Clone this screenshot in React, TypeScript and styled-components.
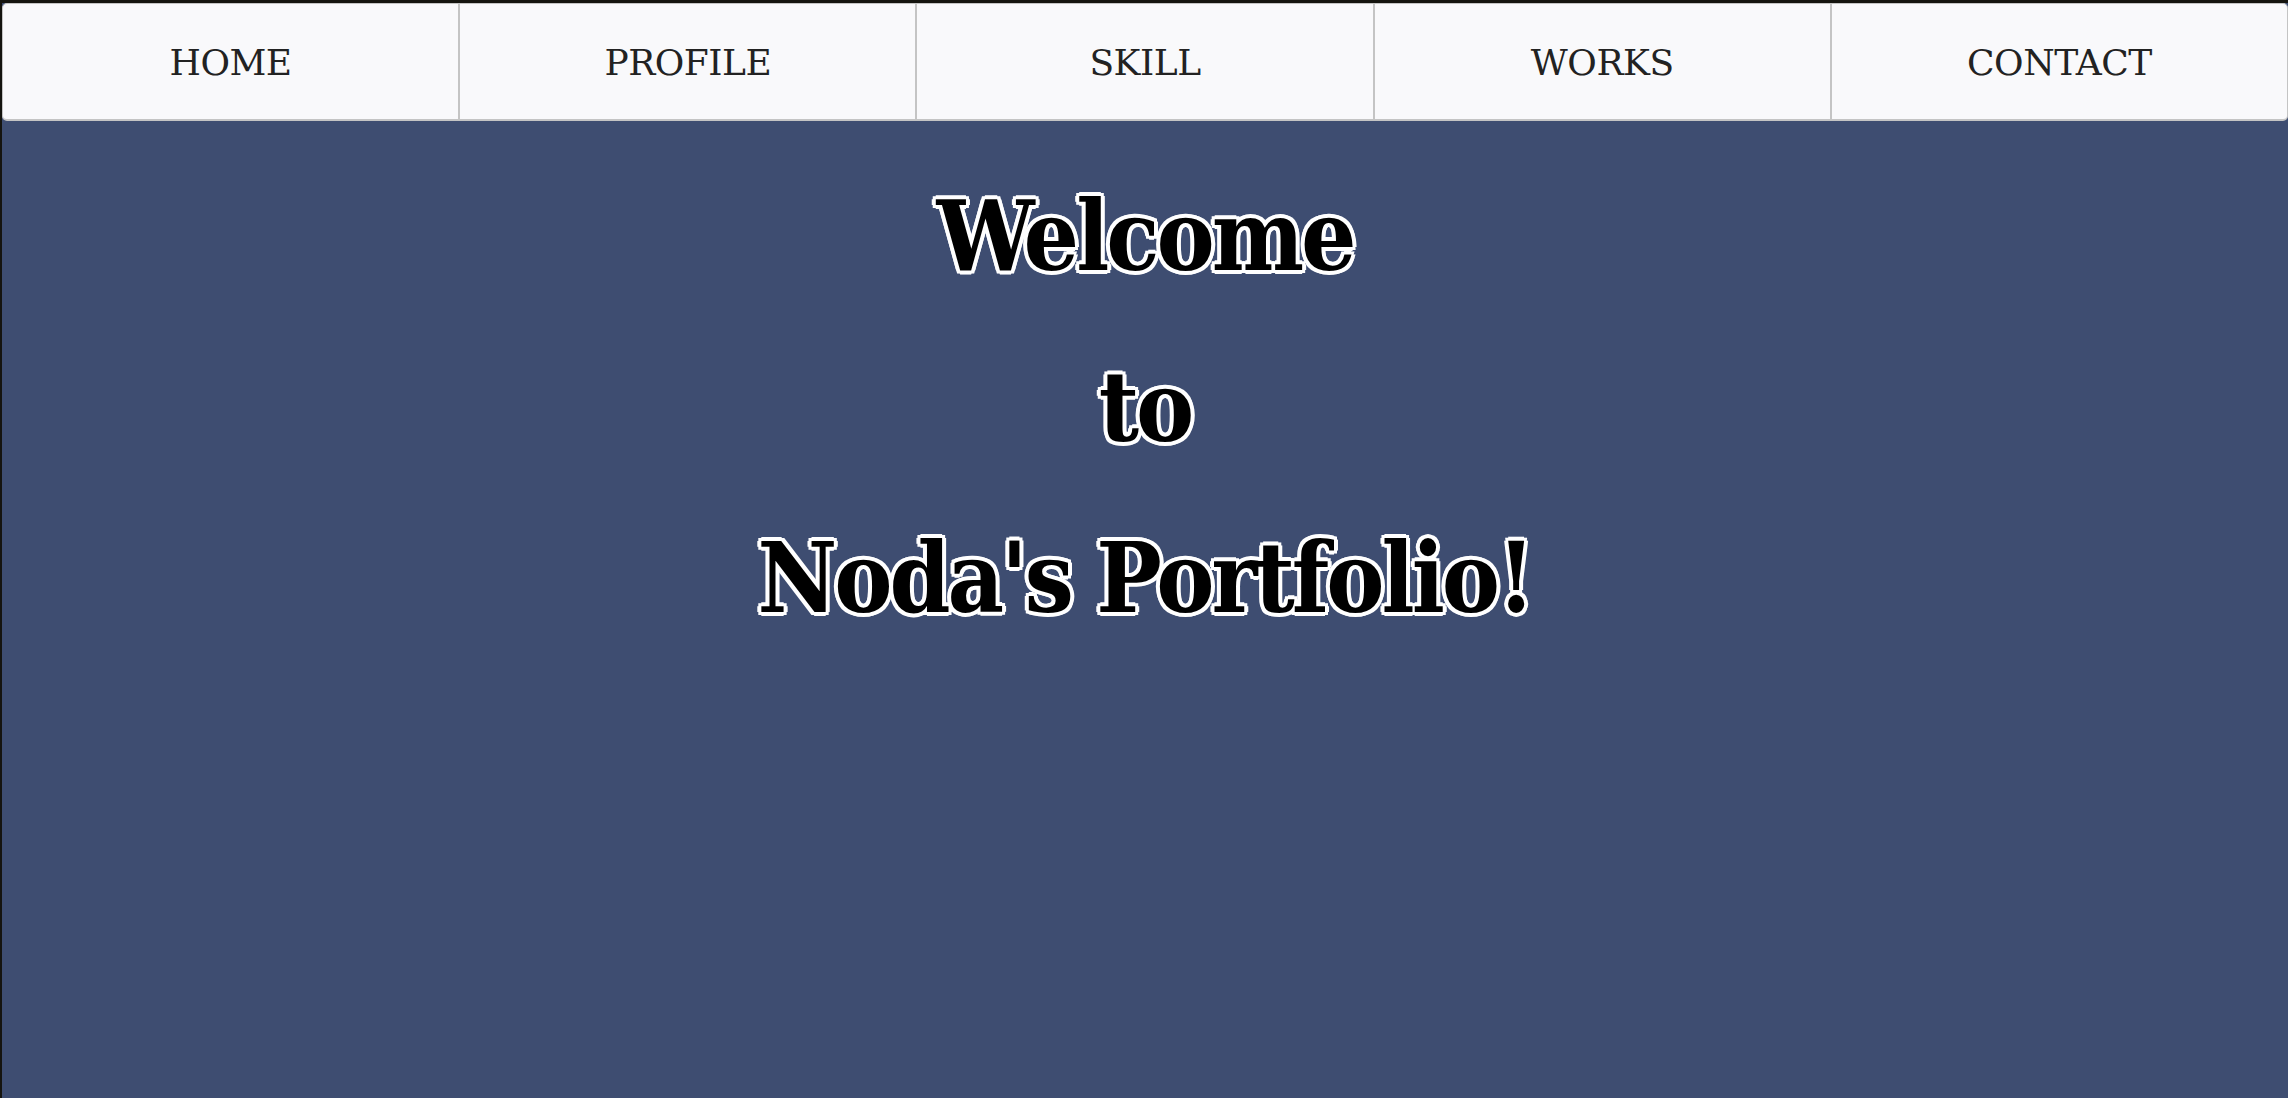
import React from "react";
import styled, {createGlobalStyle} from "styled-components";

const GlobalStyle = createGlobalStyle`
  html, body {
    margin: 0;
    padding: 0;
    background: #15140f;
  }
  body {
    font-family: "DejaVu Serif", "Liberation Serif", serif;
  }
`;

const links = ["HOME", "PROFILE", "SKILL", "WORKS", "CONTACT"];

export default function App() {
    return (
        <>
            <GlobalStyle/>
            <Page>
                <Nav>
                    {links.map((label) => (
                        <NavItem key={label} href={"#" + label.toLowerCase()}>
                            {label}
                        </NavItem>
                    ))}
                </Nav>
                <Hero>
                    <HeroLine>Welcome</HeroLine>
                    <HeroLine>to</HeroLine>
                    <HeroLine>Noda's Portfolio!</HeroLine>
                </Hero>
            </Page>
        </>
    );
}

const Page = styled.div`
  display: flex;
  flex-direction: column;
  min-height: 1095px;
  margin: 3px 0 0 2px;
  background: #3e4d71;
`;

const Nav = styled.nav`
  display: flex;
  height: 118px;
  background: #f9f9fb;
  border: 1px solid #c4c4c4;
  border-bottom-width: 2px;
  border-radius: 5px;
  box-sizing: border-box;
`;

const NavItem = styled.a`
  flex: 1;
  display: flex;
  align-items: center;
  justify-content: center;
  padding-top: 1px;
  color: #222;
  text-decoration: none;
  font-size: 36px;
  letter-spacing: -0.5px;

  &:not(:first-child) {
    border-left: 2px solid #c4c4c4;
  }
`;

const Hero = styled.section`
  display: flex;
  flex-direction: column;
  align-items: center;
  padding-top: 30px;
`;

const HeroLine = styled.h1`
  margin: 0;
  font-family: "DejaVu Serif Condensed", "DejaVu Serif", serif;
  font-size: 97px;
  line-height: 171px;
  font-weight: bold;
  color: #000;
  letter-spacing: -3px;
  word-spacing: -2px;
  text-shadow: 4px 0 0 #fff, -4px 0 0 #fff, 0 4px 0 #fff, 0 -4px 0 #fff,
    3px 3px 0 #fff, -3px 3px 0 #fff, 3px -3px 0 #fff, -3px -3px 0 #fff;
`;
